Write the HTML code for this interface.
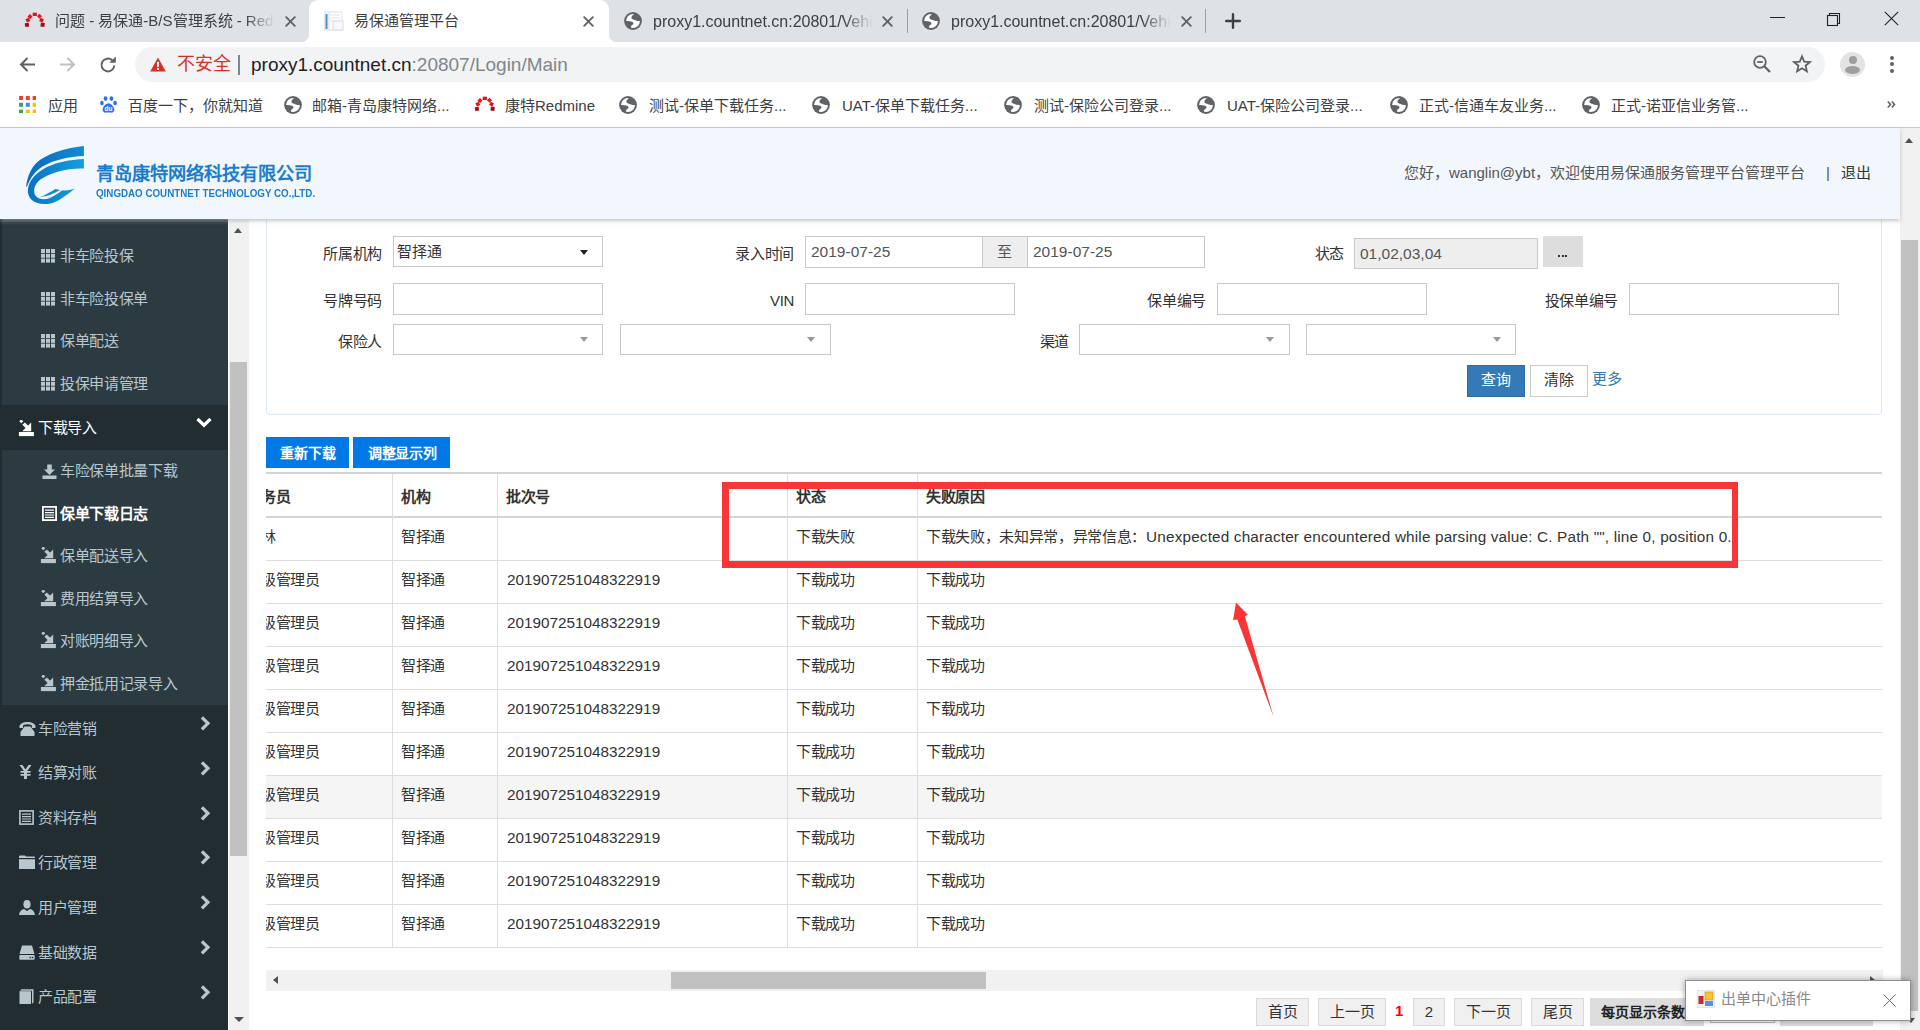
<!DOCTYPE html>
<html lang="zh-CN"><head><meta charset="utf-8">
<style>
*{box-sizing:border-box;margin:0;padding:0}
html,body{width:1920px;height:1030px;overflow:hidden;background:#fff;font-family:"Liberation Sans",sans-serif;color:#333}
.a{position:absolute;white-space:nowrap}
svg{display:block}
#tabbar{position:absolute;left:0;top:0;width:1920px;height:42px;background:#dee1e6}
.tabt{font-size:15px;color:#3c4043;top:12px;line-height:18px}
#toolbar{position:absolute;left:0;top:42px;width:1920px;height:44px;background:#fff}
#omni{position:absolute;left:135px;top:47px;width:1690px;height:35px;border-radius:18px;background:#f1f3f4}
#bmbar{position:absolute;left:0;top:86px;width:1920px;height:42px;background:#fff;border-bottom:1px solid #c8c9cb}
.bm{font-size:15px;color:#3c4043;top:97px;line-height:18px}
#header{position:absolute;left:0;top:128px;width:1900px;height:91px;background:#f2f7fd;box-shadow:0 2px 4px rgba(170,170,170,.65);z-index:5}
#sidebar{position:absolute;left:0;top:219px;width:228px;height:811px;background:#222d32;overflow:hidden}
.sub{position:absolute;left:2px;width:226px;background:#2c3b41}
.si{position:absolute;left:60px;font-size:15px;letter-spacing:-0.33px;color:#b8c7ce;line-height:18px;white-space:nowrap}
.sh{position:absolute;left:38px;font-size:15px;letter-spacing:-0.33px;color:#b8c7ce;line-height:18px;white-space:nowrap}
.ico{position:absolute}
.chev{position:absolute;left:198px}
#sbscroll{position:absolute;left:229px;top:219px;width:20px;height:811px;background:#f1f1f1}
#pgscroll{position:absolute;left:1900px;top:128px;width:20px;height:902px;background:#f1f1f1}
.lbl{position:absolute;font-size:15px;letter-spacing:-0.33px;color:#333;line-height:18px;text-align:right;white-space:nowrap}
.inp{position:absolute;height:31px;border:1px solid #c9c9c9;background:#fff}
.itx{position:absolute;font-size:15.5px;color:#555;line-height:18px;white-space:nowrap}
.caret{position:absolute;width:0;height:0;border-left:4.5px solid transparent;border-right:4.5px solid transparent;border-top:5px solid #999}
.th{position:absolute;font-size:15px;letter-spacing:-0.33px;font-weight:bold;color:#333;line-height:18px;white-space:nowrap}
.td{position:absolute;font-size:15px;letter-spacing:-0.33px;color:#333;line-height:18px;white-space:nowrap}
.hl{position:absolute;left:266px;width:1616px;height:1px;background:#ddd}
.vl{position:absolute;top:474px;width:1px;height:473px;background:#ddd}
.pg{position:absolute;top:998px;height:28px;background:#f0f0f0;border:1px solid #d9d9d9;font-size:15px;color:#333;line-height:26px;text-align:center}
</style></head><body>
<!-- ============ TAB BAR ============ -->
<div id="tabbar"></div>
<div id="tabs">
<div class="a" style="left:309px;top:0;width:300px;height:42px;background:#fff;border-radius:9px 9px 0 0"></div>
<div class="a" style="left:301px;top:34px;width:8px;height:8px;background:radial-gradient(circle at 0 0,#dee1e6 8px,#fff 8.5px)"></div>
<div class="a" style="left:609px;top:34px;width:8px;height:8px;background:radial-gradient(circle at 100% 0,#dee1e6 8px,#fff 8.5px)"></div>
<div class="a" style="left:24px;top:12px"><svg width="22" height="17" viewBox="0 0 22 17"><rect x="1.05" y="10.85" width="3.9" height="3.9" fill="#a80c10" transform="rotate(-8 3.2 13)"/><rect x="2.10" y="6.30" width="3.6" height="3.6" fill="#e0121a" transform="rotate(-25 4.1 8.3)"/><rect x="4.25" y="2.60" width="3.6" height="3.6" fill="#e8141a" transform="rotate(-45 6.25 4.6)"/><rect x="8.70" y="0.70" width="4.2" height="3.3" fill="#e3121c" transform="rotate(0 10.9 2.9)"/><rect x="13.50" y="2.60" width="3.6" height="3.6" fill="#e8141a" transform="rotate(45 15.5 4.6)"/><rect x="15.60" y="6.30" width="3.6" height="3.6" fill="#e0121a" transform="rotate(25 17.6 8.3)"/><rect x="16.65" y="10.85" width="3.9" height="3.9" fill="#a80c10" transform="rotate(8 18.8 13)"/></svg></div>
<div class="a tabt" style="left:55px;width:220px;overflow:hidden;-webkit-mask-image:linear-gradient(90deg,#000 190px,transparent 220px)">问题 - 易保通-B/S管理系统 - Redmine</div>
<div class="a" style="left:285px;top:16px"><svg width="11" height="11" viewBox="0 0 11 11"><path d="M1.2 1.2L9.8 9.8M9.8 1.2L1.2 9.8" stroke="#5f6368" stroke-width="1.9" stroke-linecap="round"/></svg></div>
<div class="a" style="left:324px;top:11px"><svg width="20" height="20" viewBox="0 0 20 20"><rect x="0.5" y="1" width="12" height="18" fill="#f4f6f8" stroke="#e3e6ea"/><rect x="1.5" y="3" width="2" height="15" fill="#4a90d4"/><rect x="5" y="1" width="13" height="18" fill="#fff" stroke="#dfe2e6"/><path d="M6 4h10M6 7h10M6 10h10" stroke="#dce3ea"/><rect x="9" y="10" width="10" height="9" fill="#f7f8fa" stroke="#d7dbe0"/></svg></div>
<div class="a tabt" style="left:354px">易保通管理平台</div>
<div class="a" style="left:583px;top:16px"><svg width="11" height="11" viewBox="0 0 11 11"><path d="M1.2 1.2L9.8 9.8M9.8 1.2L1.2 9.8" stroke="#5f6368" stroke-width="1.9" stroke-linecap="round"/></svg></div>
<div class="a" style="left:624px;top:12px"><svg width="18" height="18" viewBox="0 0 18 18"><circle cx="9" cy="9" r="8.9" fill="#5f6368"/><circle cx="9" cy="9" r="6.9" fill="#fff"/><path d="M10.2 1.8C9 3 7.2 4.5 7.4 6.1C7.6 7.5 10 7.8 11.2 8.2C12.5 8.6 13.6 9.3 16.4 8.8L17 6C16 3.5 13 1.8 10.2 1.8z" fill="#5f6368"/><path d="M1.2 9C4 9 7 9.2 8.6 10C9.8 10.8 9.8 12 8.6 12.8C7.5 13.5 6.8 14.2 6.9 15.6L7.2 17.2C4 16 1.5 13 1.2 9z" fill="#5f6368"/></svg></div>
<div class="a tabt" style="top:13px;font-size:16px;left:653px;width:220px;overflow:hidden;-webkit-mask-image:linear-gradient(90deg,#000 190px,transparent 220px)">proxy1.countnet.cn:20801/VehicleInsurance</div>
<div class="a" style="left:882px;top:16px"><svg width="11" height="11" viewBox="0 0 11 11"><path d="M1.2 1.2L9.8 9.8M9.8 1.2L1.2 9.8" stroke="#5f6368" stroke-width="1.9" stroke-linecap="round"/></svg></div>
<div class="a" style="left:907px;top:9px;width:1px;height:24px;background:#9aa0a6"></div>
<div class="a" style="left:922px;top:12px"><svg width="18" height="18" viewBox="0 0 18 18"><circle cx="9" cy="9" r="8.9" fill="#5f6368"/><circle cx="9" cy="9" r="6.9" fill="#fff"/><path d="M10.2 1.8C9 3 7.2 4.5 7.4 6.1C7.6 7.5 10 7.8 11.2 8.2C12.5 8.6 13.6 9.3 16.4 8.8L17 6C16 3.5 13 1.8 10.2 1.8z" fill="#5f6368"/><path d="M1.2 9C4 9 7 9.2 8.6 10C9.8 10.8 9.8 12 8.6 12.8C7.5 13.5 6.8 14.2 6.9 15.6L7.2 17.2C4 16 1.5 13 1.2 9z" fill="#5f6368"/></svg></div>
<div class="a tabt" style="top:13px;font-size:16px;left:951px;width:220px;overflow:hidden;-webkit-mask-image:linear-gradient(90deg,#000 190px,transparent 220px)">proxy1.countnet.cn:20801/VehicleInsurance</div>
<div class="a" style="left:1181px;top:16px"><svg width="11" height="11" viewBox="0 0 11 11"><path d="M1.2 1.2L9.8 9.8M9.8 1.2L1.2 9.8" stroke="#5f6368" stroke-width="1.9" stroke-linecap="round"/></svg></div>
<div class="a" style="left:1205px;top:9px;width:1px;height:24px;background:#9aa0a6"></div>
<div class="a" style="left:1225px;top:13px"><svg width="16" height="16" viewBox="0 0 16 16"><path d="M8 1.2V14.8M1.2 8H14.8" stroke="#3c4043" stroke-width="2.4" stroke-linecap="round"/></svg></div>
<div class="a" style="left:1770px;top:17px;width:15px;height:1px;background:#202124"></div>
<div class="a" style="left:1826px;top:12px"><svg width="15" height="15" viewBox="0 0 15 15"><path d="M3.5 3.5V1.5H13.5V11.5H11.5" fill="none" stroke="#202124" stroke-width="1.1"/><rect x="1.5" y="3.5" width="10" height="10" fill="none" stroke="#202124" stroke-width="1.1"/></svg></div>
<div class="a" style="left:1884px;top:11px"><svg width="15" height="15" viewBox="0 0 15 15"><path d="M0.8 0.8L14.2 14.2M14.2 0.8L0.8 14.2" stroke="#202124" stroke-width="1.1"/></svg></div>
</div>

<!-- ============ TOOLBAR ============ -->
<div id="toolbar"></div>
<div id="omni"></div>
<div class="a" style="left:19px;top:56px"><svg width="17" height="17" viewBox="0 0 17 17"><path d="M16 8.5H2M8.5 2L2 8.5L8.5 15" fill="none" stroke="#5f6368" stroke-width="2"/></svg></div>
<div class="a" style="left:59px;top:56px"><svg width="17" height="17" viewBox="0 0 17 17"><path d="M1 8.5H15M8.5 2L15 8.5L8.5 15" fill="none" stroke="#bdc1c6" stroke-width="2"/></svg></div>
<div class="a" style="left:99px;top:56px"><svg width="18" height="18" viewBox="0 0 18 18"><path d="M15.3 9.5A6.4 6.4 0 1 1 13.2 4.2" fill="none" stroke="#5f6368" stroke-width="2"/><path d="M10.2 6.8L16.8 6.8L16.8 0.6z" fill="#5f6368"/></svg></div>
<div class="a" style="left:150px;top:57px"><svg width="16" height="15" viewBox="0 0 16 15"><path d="M8 0.5L15.8 14.5H0.2z" fill="#d93025"/><rect x="7" y="4.8" width="2" height="5" fill="#fff"/><rect x="7" y="11" width="2" height="2" fill="#fff"/></svg></div>
<div class="a" style="left:177px;top:53px;font-size:18px;line-height:22px;color:#d93025">不安全</div>
<div class="a" style="left:238px;top:55px;width:2px;height:20px;background:#80868b"></div>
<div class="a" style="left:251px;top:54px;font-size:19px;line-height:22px;color:#202124">proxy1.countnet.cn<span style="color:#80868b">:20807/Login/Main</span></div>
<div class="a" style="left:1753px;top:55px"><svg width="19" height="19" viewBox="0 0 19 19"><circle cx="7" cy="7" r="5.8" fill="none" stroke="#5f6368" stroke-width="1.8"/><path d="M4.2 7H9.8" stroke="#5f6368" stroke-width="1.8"/><path d="M11.2 11.2L17 17" stroke="#5f6368" stroke-width="2.2"/></svg></div>
<div class="a" style="left:1792px;top:54px"><svg width="20" height="20" viewBox="0 0 20 20"><path d="M10 2.3L12.2 7.6L17.9 8L13.6 11.7L14.9 17.3L10 14.3L5.1 17.3L6.4 11.7L2.1 8L7.8 7.6z" fill="none" stroke="#5f6368" stroke-width="1.8" stroke-linejoin="miter"/></svg></div>
<div class="a" style="left:1840px;top:52px;width:25px;height:25px;border-radius:50%;background:#e3e3e3;overflow:hidden"><div class="a" style="left:8.5px;top:4px;width:8px;height:8px;border-radius:50%;background:#9e9e9e"></div><div class="a" style="left:5px;top:14px;width:15px;height:8px;border-radius:50%;background:#9e9e9e"></div></div>
<div class="a" style="left:1890px;top:56px;width:4px;height:4px;border-radius:50%;background:#5f6368"></div>
<div class="a" style="left:1890px;top:62px;width:4px;height:4px;border-radius:50%;background:#5f6368"></div>
<div class="a" style="left:1890px;top:69px;width:4px;height:4px;border-radius:50%;background:#5f6368"></div>


<!-- ============ BOOKMARKS ============ -->
<div id="bmbar"></div><div class="a" style="left:19px;top:96px"><svg width="17" height="17" viewBox="0 0 17 17"><g><rect x="0" y="0" width="4" height="4" fill="#ea4335"/><rect x="6.8" y="0" width="4" height="4" fill="#ea4335"/><rect x="13.6" y="0" width="4" height="4" fill="#ea4335"/><rect x="0" y="6.8" width="4" height="4" fill="#34a853"/><rect x="6.8" y="6.8" width="4" height="4" fill="#4285f4"/><rect x="13.6" y="6.8" width="4" height="4" fill="#fbbc05"/><rect x="0" y="13.6" width="4" height="4" fill="#34a853"/><rect x="6.8" y="13.6" width="4" height="4" fill="#fbbc05"/><rect x="13.6" y="13.6" width="4" height="4" fill="#fbbc05"/></g></svg></div><div class="a" style="left:100px;top:96px"><svg width="17" height="17" viewBox="0 0 17 17"><g fill="#2d6ff7"><ellipse cx="5.5" cy="2.6" rx="1.9" ry="2.4"/><ellipse cx="11.4" cy="2.6" rx="1.9" ry="2.4"/><ellipse cx="1.9" cy="7" rx="1.8" ry="2.2"/><ellipse cx="15.1" cy="7" rx="1.8" ry="2.2"/><path d="M8.5 7.2C6 7.2 2.6 11 2.6 13.8 2.6 15.8 4.2 16.8 6 16.6 7.2 16.5 9.8 16.5 11 16.6 12.8 16.8 14.4 15.8 14.4 13.8 14.4 11 11 7.2 8.5 7.2z"/></g><text x="8.5" y="15.4" font-size="6.5" font-family="Liberation Sans" font-weight="bold" fill="#fff" text-anchor="middle">du</text></svg></div><div class="a" style="left:474px;top:96px"><svg width="22" height="17" viewBox="0 0 22 17"><rect x="1.05" y="10.85" width="3.9" height="3.9" fill="#a80c10" transform="rotate(-8 3.2 13)"/><rect x="2.10" y="6.30" width="3.6" height="3.6" fill="#e0121a" transform="rotate(-25 4.1 8.3)"/><rect x="4.25" y="2.60" width="3.6" height="3.6" fill="#e8141a" transform="rotate(-45 6.25 4.6)"/><rect x="8.70" y="0.70" width="4.2" height="3.3" fill="#e3121c" transform="rotate(0 10.9 2.9)"/><rect x="13.50" y="2.60" width="3.6" height="3.6" fill="#e8141a" transform="rotate(45 15.5 4.6)"/><rect x="15.60" y="6.30" width="3.6" height="3.6" fill="#e0121a" transform="rotate(25 17.6 8.3)"/><rect x="16.65" y="10.85" width="3.9" height="3.9" fill="#a80c10" transform="rotate(8 18.8 13)"/></svg></div><div class="a" style="left:284px;top:96px"><svg width="18" height="18" viewBox="0 0 18 18"><circle cx="9" cy="9" r="8.9" fill="#5f6368"/><circle cx="9" cy="9" r="6.9" fill="#fff"/><path d="M10.2 1.8C9 3 7.2 4.5 7.4 6.1C7.6 7.5 10 7.8 11.2 8.2C12.5 8.6 13.6 9.3 16.4 8.8L17 6C16 3.5 13 1.8 10.2 1.8z" fill="#5f6368"/><path d="M1.2 9C4 9 7 9.2 8.6 10C9.8 10.8 9.8 12 8.6 12.8C7.5 13.5 6.8 14.2 6.9 15.6L7.2 17.2C4 16 1.5 13 1.2 9z" fill="#5f6368"/></svg></div><div class="a" style="left:619px;top:96px"><svg width="18" height="18" viewBox="0 0 18 18"><circle cx="9" cy="9" r="8.9" fill="#5f6368"/><circle cx="9" cy="9" r="6.9" fill="#fff"/><path d="M10.2 1.8C9 3 7.2 4.5 7.4 6.1C7.6 7.5 10 7.8 11.2 8.2C12.5 8.6 13.6 9.3 16.4 8.8L17 6C16 3.5 13 1.8 10.2 1.8z" fill="#5f6368"/><path d="M1.2 9C4 9 7 9.2 8.6 10C9.8 10.8 9.8 12 8.6 12.8C7.5 13.5 6.8 14.2 6.9 15.6L7.2 17.2C4 16 1.5 13 1.2 9z" fill="#5f6368"/></svg></div><div class="a" style="left:812px;top:96px"><svg width="18" height="18" viewBox="0 0 18 18"><circle cx="9" cy="9" r="8.9" fill="#5f6368"/><circle cx="9" cy="9" r="6.9" fill="#fff"/><path d="M10.2 1.8C9 3 7.2 4.5 7.4 6.1C7.6 7.5 10 7.8 11.2 8.2C12.5 8.6 13.6 9.3 16.4 8.8L17 6C16 3.5 13 1.8 10.2 1.8z" fill="#5f6368"/><path d="M1.2 9C4 9 7 9.2 8.6 10C9.8 10.8 9.8 12 8.6 12.8C7.5 13.5 6.8 14.2 6.9 15.6L7.2 17.2C4 16 1.5 13 1.2 9z" fill="#5f6368"/></svg></div><div class="a" style="left:1004px;top:96px"><svg width="18" height="18" viewBox="0 0 18 18"><circle cx="9" cy="9" r="8.9" fill="#5f6368"/><circle cx="9" cy="9" r="6.9" fill="#fff"/><path d="M10.2 1.8C9 3 7.2 4.5 7.4 6.1C7.6 7.5 10 7.8 11.2 8.2C12.5 8.6 13.6 9.3 16.4 8.8L17 6C16 3.5 13 1.8 10.2 1.8z" fill="#5f6368"/><path d="M1.2 9C4 9 7 9.2 8.6 10C9.8 10.8 9.8 12 8.6 12.8C7.5 13.5 6.8 14.2 6.9 15.6L7.2 17.2C4 16 1.5 13 1.2 9z" fill="#5f6368"/></svg></div><div class="a" style="left:1197px;top:96px"><svg width="18" height="18" viewBox="0 0 18 18"><circle cx="9" cy="9" r="8.9" fill="#5f6368"/><circle cx="9" cy="9" r="6.9" fill="#fff"/><path d="M10.2 1.8C9 3 7.2 4.5 7.4 6.1C7.6 7.5 10 7.8 11.2 8.2C12.5 8.6 13.6 9.3 16.4 8.8L17 6C16 3.5 13 1.8 10.2 1.8z" fill="#5f6368"/><path d="M1.2 9C4 9 7 9.2 8.6 10C9.8 10.8 9.8 12 8.6 12.8C7.5 13.5 6.8 14.2 6.9 15.6L7.2 17.2C4 16 1.5 13 1.2 9z" fill="#5f6368"/></svg></div><div class="a" style="left:1390px;top:96px"><svg width="18" height="18" viewBox="0 0 18 18"><circle cx="9" cy="9" r="8.9" fill="#5f6368"/><circle cx="9" cy="9" r="6.9" fill="#fff"/><path d="M10.2 1.8C9 3 7.2 4.5 7.4 6.1C7.6 7.5 10 7.8 11.2 8.2C12.5 8.6 13.6 9.3 16.4 8.8L17 6C16 3.5 13 1.8 10.2 1.8z" fill="#5f6368"/><path d="M1.2 9C4 9 7 9.2 8.6 10C9.8 10.8 9.8 12 8.6 12.8C7.5 13.5 6.8 14.2 6.9 15.6L7.2 17.2C4 16 1.5 13 1.2 9z" fill="#5f6368"/></svg></div><div class="a" style="left:1582px;top:96px"><svg width="18" height="18" viewBox="0 0 18 18"><circle cx="9" cy="9" r="8.9" fill="#5f6368"/><circle cx="9" cy="9" r="6.9" fill="#fff"/><path d="M10.2 1.8C9 3 7.2 4.5 7.4 6.1C7.6 7.5 10 7.8 11.2 8.2C12.5 8.6 13.6 9.3 16.4 8.8L17 6C16 3.5 13 1.8 10.2 1.8z" fill="#5f6368"/><path d="M1.2 9C4 9 7 9.2 8.6 10C9.8 10.8 9.8 12 8.6 12.8C7.5 13.5 6.8 14.2 6.9 15.6L7.2 17.2C4 16 1.5 13 1.2 9z" fill="#5f6368"/></svg></div><div class="a bm" style="left:48px">应用</div><div class="a bm" style="left:128px">百度一下，你就知道</div><div class="a bm" style="left:312px">邮箱-青岛康特网络...</div><div class="a bm" style="left:505px">康特Redmine</div><div class="a bm" style="left:649px">测试-保单下载任务...</div><div class="a bm" style="left:842px">UAT-保单下载任务...</div><div class="a bm" style="left:1034px">测试-保险公司登录...</div><div class="a bm" style="left:1227px">UAT-保险公司登录...</div><div class="a bm" style="left:1419px">正式-信通车友业务...</div><div class="a bm" style="left:1611px">正式-诺亚信业务管...</div><div class="a" style="left:1887px;top:101px"><svg width="9" height="7" viewBox="0 0 9 7"><path d="M0.8 0.5L3.5 3.5L0.8 6.5M4.8 0.5L7.5 3.5L4.8 6.5" fill="none" stroke="#5f6368" stroke-width="1.6"/></svg></div>


<div class="a" style="left:266px;top:180px;width:1616px;height:235px;border:1px solid #dde8f4;border-radius:4px;background:#fff"></div><div class="lbl" style="left:182px;width:200px;top:244.5px">所属机构</div><div class="inp" style="left:393px;top:236px;width:210px;height:31px;background:#fff"></div><div class="itx" style="left:397px;top:243px;font-size:15px;color:#333">智择通</div><div class="caret" style="left:580.0px;top:249.5px;border-top-color:#222"></div><div class="lbl" style="left:594px;width:200px;top:244.5px">录入时间</div><div class="inp" style="left:805px;top:236px;width:178px;height:32px;background:#fff"></div><div class="itx" style="left:811px;top:243px">2019-07-25</div><div class="inp" style="left:982px;top:236px;width:46px;height:32px;background:#eee"></div><div class="lbl" style="left:997px;top:243px;color:#555">至</div><div class="inp" style="left:1027px;top:236px;width:178px;height:32px;background:#fff"></div><div class="itx" style="left:1033px;top:243px">2019-07-25</div><div class="lbl" style="left:1144px;width:200px;top:244.5px">状态</div><div class="inp" style="left:1354px;top:238px;width:184px;height:31px;background:#eee"></div><div class="itx" style="left:1360px;top:245px">01,02,03,04</div><div class="a" style="left:1543px;top:236px;width:40px;height:31px;background:#ddd"></div><div class="a" style="left:1558px;top:255px;width:2px;height:2px;background:#333"></div><div class="a" style="left:1561.5px;top:255px;width:2px;height:2px;background:#333"></div><div class="a" style="left:1565px;top:255px;width:2px;height:2px;background:#333"></div><div class="lbl" style="left:182px;width:200px;top:291.5px">号牌号码</div><div class="inp" style="left:393px;top:283px;width:210px;height:32px;background:#fff"></div><div class="lbl" style="left:594px;width:200px;top:291.5px">VIN</div><div class="inp" style="left:805px;top:283px;width:210px;height:32px;background:#fff"></div><div class="lbl" style="left:1006px;width:200px;top:291.5px">保单编号</div><div class="inp" style="left:1217px;top:283px;width:210px;height:32px;background:#fff"></div><div class="lbl" style="left:1418px;width:200px;top:291.5px">投保单编号</div><div class="inp" style="left:1629px;top:283px;width:210px;height:32px;background:#fff"></div><div class="lbl" style="left:182px;width:200px;top:332.5px">保险人</div><div class="inp" style="left:393px;top:324px;width:210px;height:31px;background:#fff"></div><div class="caret" style="left:580.0px;top:336.5px;border-top-color:#999"></div><div class="inp" style="left:620px;top:324px;width:211px;height:31px;background:#fff"></div><div class="caret" style="left:807.0px;top:336.5px;border-top-color:#999"></div><div class="lbl" style="left:869px;width:200px;top:332.5px">渠道</div><div class="inp" style="left:1079px;top:324px;width:211px;height:31px;background:#fff"></div><div class="caret" style="left:1266.0px;top:336.5px;border-top-color:#999"></div><div class="inp" style="left:1306px;top:324px;width:210px;height:31px;background:#fff"></div><div class="caret" style="left:1493.0px;top:336.5px;border-top-color:#999"></div><div class="a" style="left:1467px;top:365px;width:58px;height:32px;background:#337ab7;border:1px solid #2e6da4"></div><div class="a" style="left:1481px;top:371px;font-size:15px;line-height:18px;color:#fff">查询</div><div class="a" style="left:1530px;top:365px;width:58px;height:32px;background:#fff;border:1px solid #ccc"></div><div class="a" style="left:1544px;top:371px;font-size:15px;line-height:18px;color:#333">清除</div><div class="a" style="left:1592px;top:370px;font-size:15px;line-height:18px;color:#337ab7">更多</div><div class="a" style="left:266px;top:437px;width:83px;height:31px;background:#0078e6"></div><div class="a" style="left:280px;top:444px;font-size:14px;font-weight:bold;line-height:18px;color:#fff;letter-spacing:-0.1px">重新下载</div><div class="a" style="left:353px;top:437px;width:97px;height:31px;background:#0078e6"></div><div class="a" style="left:368px;top:444px;font-size:14px;font-weight:bold;line-height:18px;color:#fff;letter-spacing:-0.35px">调整显示列</div><div class="a" style="left:266px;top:472px;width:1616px;height:2px;background:#d4d4d4"></div><div class="a" style="left:266px;top:516px;width:1616px;height:2px;background:#d4d4d4"></div><div class="a" style="left:266px;top:775px;width:1616px;height:43px;background:#f5f5f5"></div><div class="hl" style="top:560px"></div><div class="hl" style="top:603px"></div><div class="hl" style="top:646px"></div><div class="hl" style="top:689px"></div><div class="hl" style="top:732px"></div><div class="hl" style="top:775px"></div><div class="hl" style="top:818px"></div><div class="hl" style="top:861px"></div><div class="hl" style="top:904px"></div><div class="hl" style="top:947px"></div><div class="vl" style="left:392px"></div><div class="vl" style="left:497px"></div><div class="vl" style="left:787px"></div><div class="vl" style="left:917px"></div><div class="th" style="left:266px;top:488.0px;width:120px;overflow:hidden"><span style="margin-left:-5px">务员</span></div><div class="th" style="left:401px;top:488.0px">机构</div><div class="th" style="left:506px;top:488.0px">批次号</div><div class="th" style="left:796px;top:488.0px">状态</div><div class="th" style="left:926px;top:488.0px">失败原因</div><div class="td" style="left:266px;top:528.0px;width:120px;overflow:hidden"><span style="margin-left:-5px">林</span></div><div class="td" style="left:401px;top:528.0px">智择通</div><div class="td" style="left:796px;top:528.0px">下载失败</div><div class="td" style="left:926px;top:528.0px">下载失败，未知异常，异常信息：<span style="font-size:15.3px;letter-spacing:0.17px">Unexpected character encountered while parsing value: C. Path "", line 0, position 0.</span></div><div class="td" style="left:266px;top:571.0px;width:120px;overflow:hidden"><span style="margin-left:-5px">级管理员</span></div><div class="td" style="left:401px;top:571.0px">智择通</div><div class="td" style="left:507px;top:571.0px;font-size:15.3px;letter-spacing:0">201907251048322919</div><div class="td" style="left:796px;top:571.0px">下载成功</div><div class="td" style="left:926px;top:571.0px">下载成功</div><div class="td" style="left:266px;top:614.0px;width:120px;overflow:hidden"><span style="margin-left:-5px">级管理员</span></div><div class="td" style="left:401px;top:614.0px">智择通</div><div class="td" style="left:507px;top:614.0px;font-size:15.3px;letter-spacing:0">201907251048322919</div><div class="td" style="left:796px;top:614.0px">下载成功</div><div class="td" style="left:926px;top:614.0px">下载成功</div><div class="td" style="left:266px;top:657.0px;width:120px;overflow:hidden"><span style="margin-left:-5px">级管理员</span></div><div class="td" style="left:401px;top:657.0px">智择通</div><div class="td" style="left:507px;top:657.0px;font-size:15.3px;letter-spacing:0">201907251048322919</div><div class="td" style="left:796px;top:657.0px">下载成功</div><div class="td" style="left:926px;top:657.0px">下载成功</div><div class="td" style="left:266px;top:700.0px;width:120px;overflow:hidden"><span style="margin-left:-5px">级管理员</span></div><div class="td" style="left:401px;top:700.0px">智择通</div><div class="td" style="left:507px;top:700.0px;font-size:15.3px;letter-spacing:0">201907251048322919</div><div class="td" style="left:796px;top:700.0px">下载成功</div><div class="td" style="left:926px;top:700.0px">下载成功</div><div class="td" style="left:266px;top:743.0px;width:120px;overflow:hidden"><span style="margin-left:-5px">级管理员</span></div><div class="td" style="left:401px;top:743.0px">智择通</div><div class="td" style="left:507px;top:743.0px;font-size:15.3px;letter-spacing:0">201907251048322919</div><div class="td" style="left:796px;top:743.0px">下载成功</div><div class="td" style="left:926px;top:743.0px">下载成功</div><div class="td" style="left:266px;top:786.0px;width:120px;overflow:hidden"><span style="margin-left:-5px">级管理员</span></div><div class="td" style="left:401px;top:786.0px">智择通</div><div class="td" style="left:507px;top:786.0px;font-size:15.3px;letter-spacing:0">201907251048322919</div><div class="td" style="left:796px;top:786.0px">下载成功</div><div class="td" style="left:926px;top:786.0px">下载成功</div><div class="td" style="left:266px;top:829.0px;width:120px;overflow:hidden"><span style="margin-left:-5px">级管理员</span></div><div class="td" style="left:401px;top:829.0px">智择通</div><div class="td" style="left:507px;top:829.0px;font-size:15.3px;letter-spacing:0">201907251048322919</div><div class="td" style="left:796px;top:829.0px">下载成功</div><div class="td" style="left:926px;top:829.0px">下载成功</div><div class="td" style="left:266px;top:872.0px;width:120px;overflow:hidden"><span style="margin-left:-5px">级管理员</span></div><div class="td" style="left:401px;top:872.0px">智择通</div><div class="td" style="left:507px;top:872.0px;font-size:15.3px;letter-spacing:0">201907251048322919</div><div class="td" style="left:796px;top:872.0px">下载成功</div><div class="td" style="left:926px;top:872.0px">下载成功</div><div class="td" style="left:266px;top:915.0px;width:120px;overflow:hidden"><span style="margin-left:-5px">级管理员</span></div><div class="td" style="left:401px;top:915.0px">智择通</div><div class="td" style="left:507px;top:915.0px;font-size:15.3px;letter-spacing:0">201907251048322919</div><div class="td" style="left:796px;top:915.0px">下载成功</div><div class="td" style="left:926px;top:915.0px">下载成功</div><div class="a" style="left:722px;top:482px;width:1016px;height:86px;border:7px solid #f93535;border-right-width:6px"></div><svg class="a" style="left:0;top:0" width="1920" height="1030"><path d="M1236,602.5 L1247.8,614.7 L1244.9,616.2 L1273.6,717 L1237.3,619.5 L1233.1,619.9 Z" fill="#f93535"/></svg><div class="a" style="left:266px;top:970px;width:1617px;height:21px;background:#f1f1f1"></div><div class="a" style="left:671px;top:972px;width:315px;height:17px;background:#c1c1c1"></div><div class="a" style="left:273px;top:976px;width:0;height:0;border-top:4.5px solid transparent;border-bottom:4.5px solid transparent;border-right:5px solid #505050"></div><div class="a" style="left:1870px;top:976px;width:0;height:0;border-top:4.5px solid transparent;border-bottom:4.5px solid transparent;border-left:5px solid #505050"></div><div class="pg" style="left:1256px;width:53px">首页</div><div class="pg" style="left:1318px;width:68px">上一页</div><div class="pg" style="left:1413px;width:32px">2</div><div class="pg" style="left:1454px;width:68px">下一页</div><div class="pg" style="left:1531px;width:53px">尾页</div><div class="a" style="left:1395px;top:1002px;font-size:15px;font-weight:bold;color:#f00;line-height:18px">1</div><div class="a" style="left:1590px;top:998px;width:114px;height:28px;background:#ddd"></div><div class="a" style="left:1601px;top:1003px;font-size:14px;font-weight:bold;color:#222;line-height:18px">每页显示条数</div><div class="a" style="left:1710px;top:1020px;width:65px;height:3px;border:1px solid #bbb;border-top:none"></div><div class="a" style="left:1780px;top:998px;width:93px;height:28px;background:#ddd"></div><div class="a" style="left:1685px;top:980px;width:226px;height:41px;background:#fff;border:1px solid #8f8f8f;box-shadow:0 0 6px rgba(0,0,0,.35);z-index:8"></div><div class="a" style="left:1697px;top:990px;z-index:9"><svg width="18" height="18" viewBox="0 0 18 18"><rect x="0" y="0" width="18" height="18" fill="#f3f3f3" stroke="#d0d0d0" stroke-width="0.8"/><rect x="1.5" y="6" width="5" height="8" fill="#cc2a2a"/><rect x="8" y="2" width="8" height="8" fill="#f6c431" stroke="#c59a1a" stroke-width="0.6"/><rect x="8" y="11" width="8" height="5" fill="#5d8fe0"/></svg></div><div class="a" style="left:1721px;top:990px;font-size:15px;color:#888;line-height:18px;z-index:9">出单中心插件</div><div class="a" style="left:1883px;top:994px;z-index:9"><svg width="13" height="13" viewBox="0 0 13 13"><path d="M0.5 0.5L12.5 12.5M12.5 0.5L0.5 12.5" stroke="#666" stroke-width="1"/></svg></div>
<div id="header">
<div class="a" style="left:20px;top:12px"><svg width="80" height="70" viewBox="0 0 1177 1030">
<defs><linearGradient id="g1" x1="0" y1="0" x2="1" y2="0"><stop offset="0" stop-color="#0a6cbf"/><stop offset="1" stop-color="#0f8ad3"/></linearGradient>
<linearGradient id="g2" x1="0" y1="0" x2="1" y2="0"><stop offset="0" stop-color="#0a72c4"/><stop offset="1" stop-color="#14a0dc"/></linearGradient></defs>
<path d="M940,90 C650,120 380,210 240,340 C160,420 110,540 90,680 L100,690 C150,560 220,460 330,390 C500,290 720,245 940,235 Z" fill="url(#g1)"/>
<path d="M940,280 L940,420 C700,410 450,480 300,580 C200,660 190,760 230,820 C280,880 360,880 420,860 C500,830 560,790 620,740 C700,750 760,730 810,715 C700,800 600,880 500,920 C380,960 250,950 170,880 C100,810 100,700 160,600 C260,440 500,300 940,280 Z" fill="url(#g2)"/>
<path d="M290,840 C380,810 450,760 520,720 L590,735 C500,790 400,830 290,840 Z" fill="#1488d2"/>
</svg></div>
<div class="a" style="left:96px;top:36px;font-size:18.2px;font-weight:bold;color:#1a7dd0;line-height:20px">青岛康特网络科技有限公司</div>
<div class="a" style="left:96px;top:59px;font-size:11.2px;font-weight:bold;color:#1a7dd0;line-height:12px;transform:scaleX(0.874);transform-origin:0 0">QINGDAO COUNTNET TECHNOLOGY CO.,LTD.</div>
<div class="a" style="left:1404px;top:36px;font-size:15px;color:#555;line-height:18px">您好，wanglin@ybt，欢迎使用易保通服务管理平台管理平台</div>
<div class="a" style="left:1826px;top:36px;font-size:15px;color:#555;line-height:18px">|</div>
<div class="a" style="left:1841px;top:36px;font-size:15px;color:#333;line-height:18px">退出</div>
</div>
<div id="sidebar"><div class="sub" style="top:0;height:186px"></div><div class="ico" style="left:41px;top:30.0px"><svg width="15" height="14" viewBox="0 0 15 14"><rect x="0" y="0.0" width="4" height="4" fill="#b8c7ce"/><rect x="5" y="0.0" width="4" height="4" fill="#b8c7ce"/><rect x="10" y="0.0" width="4" height="4" fill="#b8c7ce"/><rect x="0" y="4.8" width="4" height="4" fill="#b8c7ce"/><rect x="5" y="4.8" width="4" height="4" fill="#b8c7ce"/><rect x="10" y="4.8" width="4" height="4" fill="#b8c7ce"/><rect x="0" y="9.6" width="4" height="4" fill="#b8c7ce"/><rect x="5" y="9.6" width="4" height="4" fill="#b8c7ce"/><rect x="10" y="9.6" width="4" height="4" fill="#b8c7ce"/></svg></div><div class="si" style="top:28.0px">非车险投保</div><div class="ico" style="left:41px;top:72.6px"><svg width="15" height="14" viewBox="0 0 15 14"><rect x="0" y="0.0" width="4" height="4" fill="#b8c7ce"/><rect x="5" y="0.0" width="4" height="4" fill="#b8c7ce"/><rect x="10" y="0.0" width="4" height="4" fill="#b8c7ce"/><rect x="0" y="4.8" width="4" height="4" fill="#b8c7ce"/><rect x="5" y="4.8" width="4" height="4" fill="#b8c7ce"/><rect x="10" y="4.8" width="4" height="4" fill="#b8c7ce"/><rect x="0" y="9.6" width="4" height="4" fill="#b8c7ce"/><rect x="5" y="9.6" width="4" height="4" fill="#b8c7ce"/><rect x="10" y="9.6" width="4" height="4" fill="#b8c7ce"/></svg></div><div class="si" style="top:70.6px">非车险投保单</div><div class="ico" style="left:41px;top:115.2px"><svg width="15" height="14" viewBox="0 0 15 14"><rect x="0" y="0.0" width="4" height="4" fill="#b8c7ce"/><rect x="5" y="0.0" width="4" height="4" fill="#b8c7ce"/><rect x="10" y="0.0" width="4" height="4" fill="#b8c7ce"/><rect x="0" y="4.8" width="4" height="4" fill="#b8c7ce"/><rect x="5" y="4.8" width="4" height="4" fill="#b8c7ce"/><rect x="10" y="4.8" width="4" height="4" fill="#b8c7ce"/><rect x="0" y="9.6" width="4" height="4" fill="#b8c7ce"/><rect x="5" y="9.6" width="4" height="4" fill="#b8c7ce"/><rect x="10" y="9.6" width="4" height="4" fill="#b8c7ce"/></svg></div><div class="si" style="top:113.2px">保单配送</div><div class="ico" style="left:41px;top:157.8px"><svg width="15" height="14" viewBox="0 0 15 14"><rect x="0" y="0.0" width="4" height="4" fill="#b8c7ce"/><rect x="5" y="0.0" width="4" height="4" fill="#b8c7ce"/><rect x="10" y="0.0" width="4" height="4" fill="#b8c7ce"/><rect x="0" y="4.8" width="4" height="4" fill="#b8c7ce"/><rect x="5" y="4.8" width="4" height="4" fill="#b8c7ce"/><rect x="10" y="4.8" width="4" height="4" fill="#b8c7ce"/><rect x="0" y="9.6" width="4" height="4" fill="#b8c7ce"/><rect x="5" y="9.6" width="4" height="4" fill="#b8c7ce"/><rect x="10" y="9.6" width="4" height="4" fill="#b8c7ce"/></svg></div><div class="si" style="top:155.8px">投保申请管理</div><div class="ico" style="left:18px;top:201px"><svg width="16" height="17" viewBox="0 0 16 17"><rect x="0.9" y="12" width="15" height="4.1" fill="#fff"/><path d="M13.2 2.4V11.2H4.2z" fill="#fff"/><path d="M9.8 7.8L5.6 3.6" stroke="#fff" stroke-width="3.4"/><path d="M4.3 2.3L2.2 0.3" stroke="#fff" stroke-width="2.8"/></svg></div><div class="sh" style="top:200px;color:#fff">下载导入</div><div class="chev" style="left:196px;top:198px"><svg width="16" height="11" viewBox="0 0 16 11"><path d="M1.5 2L8 8.2L14.5 2" fill="none" stroke="#fff" stroke-width="3.2"/></svg></div><div class="sub" style="top:231px;height:255px"></div><div class="ico" style="left:42px;top:244.5px"><svg width="15" height="15" viewBox="0 0 15 15"><path d="M5.2 0.5H9.8V5.5H13L7.5 11L2 5.5H5.2z" fill="#b8c7ce"/><path d="M0.5 11.5H14.5V15H0.5z" fill="#b8c7ce"/></svg></div><div class="si" style="top:243.0px;color:#b8c7ce;">车险保单批量下载</div><div class="ico" style="left:42px;top:287.1px"><svg width="15" height="15" viewBox="0 0 15 15"><rect x="0.9" y="0.9" width="13.2" height="13.2" fill="none" stroke="#fff" stroke-width="1.8"/><path d="M3 4.2H12M3 6.6H12M3 9H12M3 11.4H12" stroke="#fff" stroke-width="1.2"/></svg></div><div class="si" style="top:285.6px;color:#fff;font-weight:bold">保单下载日志</div><div class="ico" style="left:40px;top:328.2px"><svg width="16" height="17" viewBox="0 0 16 17"><rect x="0.9" y="12" width="15" height="4.1" fill="#b8c7ce"/><path d="M13.2 2.4V11.2H4.2z" fill="#b8c7ce"/><path d="M9.8 7.8L5.6 3.6" stroke="#b8c7ce" stroke-width="3.4"/><path d="M4.3 2.3L2.2 0.3" stroke="#b8c7ce" stroke-width="2.8"/></svg></div><div class="si" style="top:328.2px;color:#b8c7ce;">保单配送导入</div><div class="ico" style="left:40px;top:370.8px"><svg width="16" height="17" viewBox="0 0 16 17"><rect x="0.9" y="12" width="15" height="4.1" fill="#b8c7ce"/><path d="M13.2 2.4V11.2H4.2z" fill="#b8c7ce"/><path d="M9.8 7.8L5.6 3.6" stroke="#b8c7ce" stroke-width="3.4"/><path d="M4.3 2.3L2.2 0.3" stroke="#b8c7ce" stroke-width="2.8"/></svg></div><div class="si" style="top:370.8px;color:#b8c7ce;">费用结算导入</div><div class="ico" style="left:40px;top:413.4px"><svg width="16" height="17" viewBox="0 0 16 17"><rect x="0.9" y="12" width="15" height="4.1" fill="#b8c7ce"/><path d="M13.2 2.4V11.2H4.2z" fill="#b8c7ce"/><path d="M9.8 7.8L5.6 3.6" stroke="#b8c7ce" stroke-width="3.4"/><path d="M4.3 2.3L2.2 0.3" stroke="#b8c7ce" stroke-width="2.8"/></svg></div><div class="si" style="top:413.4px;color:#b8c7ce;">对账明细导入</div><div class="ico" style="left:40px;top:456.0px"><svg width="16" height="17" viewBox="0 0 16 17"><rect x="0.9" y="12" width="15" height="4.1" fill="#b8c7ce"/><path d="M13.2 2.4V11.2H4.2z" fill="#b8c7ce"/><path d="M9.8 7.8L5.6 3.6" stroke="#b8c7ce" stroke-width="3.4"/><path d="M4.3 2.3L2.2 0.3" stroke="#b8c7ce" stroke-width="2.8"/></svg></div><div class="si" style="top:456.0px;color:#b8c7ce;">押金抵用记录导入</div><div class="ico" style="left:19px;top:501.5px"><svg width="17" height="15" viewBox="0 0 17 15"><path d="M0.5 5.5C0.5 3 4 1 8.5 1S16.5 3 16.5 5.5L16.5 7L13 7L13 5C13 4 11 3.3 8.5 3.3S4 4 4 5L4 7L0.5 7z" fill="#b8c7ce"/><path d="M5.5 5.5H11.5L15.5 11V15H1.5V11z" fill="#b8c7ce"/></svg></div><div class="sh" style="top:500.5px">车险营销</div><div class="chev" style="left:200px;top:497.0px"><svg width="11" height="15" viewBox="0 0 11 15"><path d="M1.9 1.3L7.9 7.3L1.9 13.3" fill="none" stroke="#b8c7ce" stroke-width="3.3"/></svg></div><div class="ico" style="left:19px;top:546.3px"><svg width="13" height="14" viewBox="0 0 13 14"><path d="M0.5 0L3.5 0L6.5 4.5L9.5 0L12.5 0L8.2 6H11.5V7.8H8V9H11.5V10.8H8V14H5V10.8H1.5V9H5V7.8H1.5V6H4.8z" fill="#b8c7ce"/></svg></div><div class="sh" style="top:545.3px">结算对账</div><div class="chev" style="left:200px;top:541.8px"><svg width="11" height="15" viewBox="0 0 11 15"><path d="M1.9 1.3L7.9 7.3L1.9 13.3" fill="none" stroke="#b8c7ce" stroke-width="3.3"/></svg></div><div class="ico" style="left:19px;top:591.1px"><svg width="15" height="15" viewBox="0 0 15 15"><rect x="0.9" y="0.9" width="13.2" height="13.2" fill="none" stroke="#b8c7ce" stroke-width="1.6"/><path d="M3 4.2H12M3 6.6H12M3 9H12M3 11.4H12" stroke="#b8c7ce" stroke-width="1.2"/></svg></div><div class="sh" style="top:590.1px">资料存档</div><div class="chev" style="left:200px;top:586.6px"><svg width="11" height="15" viewBox="0 0 11 15"><path d="M1.9 1.3L7.9 7.3L1.9 13.3" fill="none" stroke="#b8c7ce" stroke-width="3.3"/></svg></div><div class="ico" style="left:19px;top:635.9px"><svg width="16" height="14" viewBox="0 0 16 14"><path d="M0 2.5V1.5Q0 0.5 1 0.5H6L7 1.5H15Q16 1.5 16 2.5V3H0z" fill="#b8c7ce"/><path d="M0 4.2H16V14H0z" fill="#b8c7ce"/></svg></div><div class="sh" style="top:634.9px">行政管理</div><div class="chev" style="left:200px;top:631.4px"><svg width="11" height="15" viewBox="0 0 11 15"><path d="M1.9 1.3L7.9 7.3L1.9 13.3" fill="none" stroke="#b8c7ce" stroke-width="3.3"/></svg></div><div class="ico" style="left:19px;top:680.7px"><svg width="16" height="15" viewBox="0 0 16 15"><ellipse cx="8" cy="4.3" rx="3.6" ry="4.3" fill="#b8c7ce"/><path d="M0 15C0.5 11 3 9.5 5 9L8 11L11 9C13 9.5 15.5 11 16 15z" fill="#b8c7ce"/></svg></div><div class="sh" style="top:679.7px">用户管理</div><div class="chev" style="left:200px;top:676.2px"><svg width="11" height="15" viewBox="0 0 11 15"><path d="M1.9 1.3L7.9 7.3L1.9 13.3" fill="none" stroke="#b8c7ce" stroke-width="3.3"/></svg></div><div class="ico" style="left:19px;top:725.5px"><svg width="16" height="15" viewBox="0 0 16 15"><path d="M3 0.5H13L15.5 9H0.5z" fill="#b8c7ce"/><rect x="0.3" y="10" width="15.4" height="4.8" rx="1" fill="#b8c7ce"/><rect x="10.5" y="11.8" width="1.4" height="1.4" fill="#222d32"/><rect x="12.8" y="11.8" width="1.4" height="1.4" fill="#222d32"/></svg></div><div class="sh" style="top:724.5px">基础数据</div><div class="chev" style="left:200px;top:721.0px"><svg width="11" height="15" viewBox="0 0 11 15"><path d="M1.9 1.3L7.9 7.3L1.9 13.3" fill="none" stroke="#b8c7ce" stroke-width="3.3"/></svg></div><div class="ico" style="left:19px;top:770.3px"><svg width="15" height="15" viewBox="0 0 15 15"><path d="M0.5 2L2.5 0.5H14.5V13L12.5 14.5z" fill="none"/><path d="M0.5 2.2H12V15H0.5z" fill="#b8c7ce"/><path d="M2.5 0.3H14.5V13.5L13 14.8V1.8H1z" fill="#b8c7ce"/></svg></div><div class="sh" style="top:769.3px">产品配置</div><div class="chev" style="left:200px;top:765.8px"><svg width="11" height="15" viewBox="0 0 11 15"><path d="M1.9 1.3L7.9 7.3L1.9 13.3" fill="none" stroke="#b8c7ce" stroke-width="3.3"/></svg></div></div><div class="a" style="left:228px;top:219px;width:1px;height:811px;background:#fff"></div><div id="sbscroll"><div class="a" style="left:1px;top:143px;width:17px;height:494px;background:#c1c1c1"></div><div class="a" style="left:5px;top:9px;width:0;height:0;border-left:4.5px solid transparent;border-right:4.5px solid transparent;border-bottom:5px solid #505050"></div><div class="a" style="left:5px;top:798px;width:0;height:0;border-left:5px solid transparent;border-right:5px solid transparent;border-top:5px solid #505050"></div></div>
<div id="pgscroll"><div class="a" style="left:1px;top:112px;width:17px;height:771px;background:#c1c1c1"></div><div class="a" style="left:5px;top:10px;width:0;height:0;border-left:4.5px solid transparent;border-right:4.5px solid transparent;border-bottom:5px solid #505050"></div><div class="a" style="left:7px;top:890px;width:0;height:0;border-left:4px solid transparent;border-right:4px solid transparent;border-top:5px solid #505050"></div></div>
</body></html>
